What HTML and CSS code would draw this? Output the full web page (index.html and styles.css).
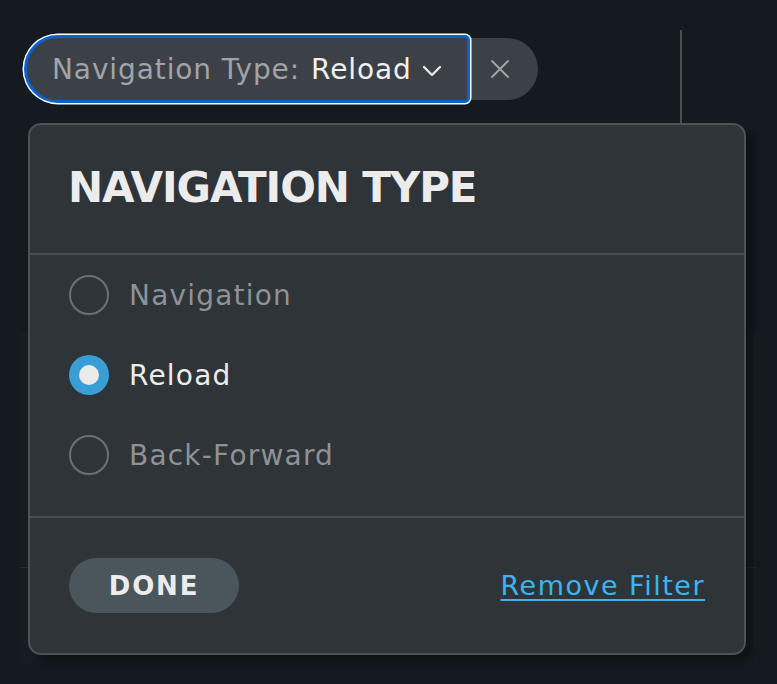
FILE: index.html
```html
<!DOCTYPE html>
<html>
<head>
<meta charset="utf-8">
<link rel="stylesheet" href="styles.css">
</head>
<body>
<div class="page">
  <div class="backdrop">
    <div class="vline"></div>
    <div class="panel"><div class="panel-rule"></div></div>
  </div>
  <div class="filter-row">
    <div class="chip">
      <button class="chip-main">
        <span class="chip-label">Navigation Type:</span>
        <span class="chip-value">Reload</span>
        <svg class="chevron" width="20" height="12" viewBox="0 0 20 12"><path d="M2 2 L10 10 L18 2" fill="none" stroke="#f0f0f0" stroke-width="2.2" stroke-linecap="round" stroke-linejoin="round"/></svg>
      </button>
      <button class="chip-close">
        <svg width="20" height="20" viewBox="0 0 20 20"><path d="M2 2 L18 18 M18 2 L2 18" stroke="#a3a7ab" stroke-width="1.8" stroke-linecap="round"/></svg>
      </button>
    </div>
  </div>
  <div class="popover">
    <div class="pop-head"><h2 class="pop-title">NAVIGATION TYPE</h2></div>
    <div class="pop-list">
      <label class="radio-row"><span class="radio"></span><span class="radio-text">Navigation</span></label>
      <label class="radio-row selected"><span class="radio"><span class="dot"></span></span><span class="radio-text">Reload</span></label>
      <label class="radio-row"><span class="radio"></span><span class="radio-text">Back-Forward</span></label>
    </div>
    <div class="pop-foot">
      <button class="done">DONE</button>
      <a class="remove" href="#">Remove Filter</a>
    </div>
  </div>
</div>
</body>
</html>
```
FILE: styles.css
```css
html, body {
  margin: 0;
  padding: 0;
  background: #141a20;
}
body {
  width: 777px;
  height: 684px;
  overflow: hidden;
  font-family: "DejaVu Sans", sans-serif;
}
.page {
  position: relative;
  width: 777px;
  height: 684px;
  padding: 35px 0 0 24px;
  box-sizing: border-box;
}
.backdrop {
  position: absolute;
  inset: 0;
}
.vline {
  position: absolute;
  left: 680px;
  top: 30px;
  width: 2px;
  height: 100px;
  background: #4a4f54;
}
.panel {
  position: absolute;
  left: 20px;
  top: 333px;
  width: 737px;
  height: 330px;
  background: #161d22;
}
.panel-rule {
  margin-top: 234px;
  height: 1px;
  background: #262d33;
}
.filter-row {
  position: relative;
  display: flex;
}
.chip {
  display: flex;
  align-items: center;
}
.chip-main {
  display: flex;
  align-items: center;
  height: 68px;
  box-sizing: border-box;
  padding: 0 25px 0 25px;
  background: #3c4147;
  border: 3px solid #0a62d0;
  border-radius: 34px 5px 5px 34px;
  box-shadow: 0 0 0 1.5px #ffffff;
  font-family: inherit;
  font-size: 28px;
  letter-spacing: 0.9px;
  cursor: pointer;
  position: relative;
  z-index: 1;
}
.chip-label {
  color: #a0a4a8;
}
.chip-value {
  color: #f0f0f0;
  margin-left: 11px;
}
.chevron {
  margin-left: 10px;
  margin-top: 4px;
}
.chip-close {
  display: flex;
  align-items: center;
  justify-content: center;
  width: 68px;
  height: 62px;
  padding: 0 8px 0 0;
  border: none;
  background: #3c4147;
  border-radius: 0 31px 31px 0;
  cursor: pointer;
}
.popover {
  position: absolute;
  left: 28px;
  top: 123px;
  width: 718px;
  height: 532px;
  box-sizing: border-box;
  background: #2e3438;
  border: 2px solid #4e5155;
  border-radius: 13px;
  box-shadow: 8px 8px 6px rgba(8, 12, 15, 0.55);
  display: flex;
  flex-direction: column;
}
.pop-head {
  height: 130px;
  display: flex;
  align-items: center;
  padding: 0 38px 4px;
  box-sizing: border-box;
  border-bottom: 2px solid #4a4e52;
}
.pop-title {
  margin: 0;
  font-size: 42px;
  font-weight: bold;
  color: #ececec;
  letter-spacing: -1.1px;
}
.pop-list {
  display: flex;
  flex-direction: column;
  padding: 0 39px 21px;
  border-bottom: 2px solid #4a4e52;
}
.radio-row {
  display: flex;
  align-items: center;
  height: 80px;
  cursor: pointer;
}
.radio {
  width: 40px;
  height: 40px;
  box-sizing: border-box;
  border: 2px solid #6b7074;
  border-radius: 50%;
  display: flex;
  align-items: center;
  justify-content: center;
  flex: none;
}
.radio-text {
  margin-left: 20px;
  font-size: 28px;
  color: #8e9296;
  letter-spacing: 1.2px;
}
.selected .radio {
  border: none;
  background: #3a9ed6;
}
.selected .dot {
  width: 20px;
  height: 20px;
  border-radius: 50%;
  background: #ebebeb;
}
.selected .radio-text {
  color: #ececec;
}
.pop-foot {
  flex: 1;
  display: flex;
  align-items: center;
  justify-content: space-between;
  padding: 0 39px;
}
.done {
  width: 170px;
  height: 55px;
  border: none;
  border-radius: 28px;
  background: #4a555c;
  color: #ececec;
  font-family: inherit;
  font-weight: bold;
  font-size: 26px;
  letter-spacing: 1.8px;
  cursor: pointer;
}
.remove {
  color: #3db4f0;
  font-size: 27px;
  text-decoration: underline;
  text-decoration-thickness: 2px;
  text-underline-offset: 4px;
  letter-spacing: 1.5px;
}
```
